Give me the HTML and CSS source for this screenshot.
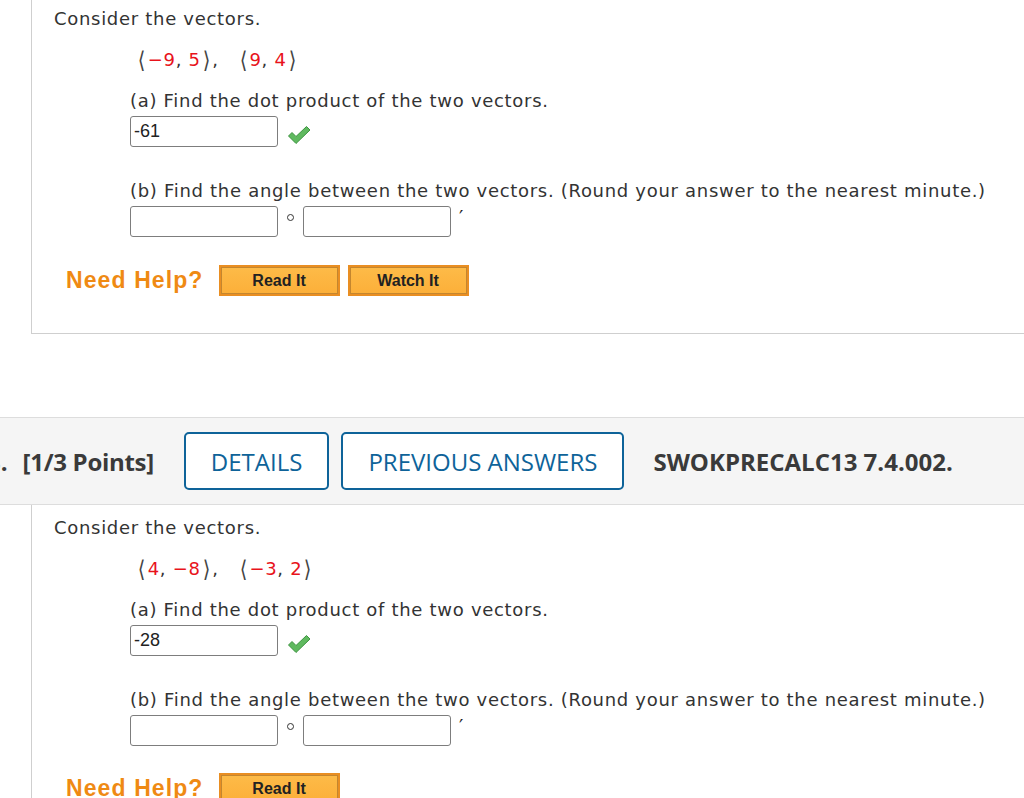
FILE: index.html
```html
<!DOCTYPE html>
<html>
<head>
<meta charset="utf-8">
<link rel="stylesheet" href="styles.css">
</head>
<body>
<div class="panel panel-first">
  <div class="intro">Consider the vectors.</div>
  <div class="indent">
    <div class="vectors"><span class="br">⟨</span><span class="red">−9</span>, <span class="red">5</span><span class="br">⟩</span>,<span class="vgap"></span><span class="br">⟨</span><span class="red">9</span>, <span class="red">4</span><span class="br">⟩</span></div>
    <div class="line">(a) Find the dot product of the two vectors.</div>
    <div class="inrow">
      <div class="box">-61</div>
      <svg class="check" width="24" height="20" viewBox="0 0 24 20"><path d="M1.5 11 L5 7.5 L9 11.5 L19.5 1.5 L23 5 L9 18.5 Z" fill="#5fb95f" stroke="#3d9440" stroke-width="1" stroke-linejoin="round"/></svg>
    </div>
    <div class="line lb">(b) Find the angle between the two vectors. (Round your answer to the nearest minute.)</div>
    <div class="inrow">
      <div class="box"></div><span class="deg"></span><div class="box"></div><span class="prime">′</span>
    </div>
  </div>
  <div class="help">
    <span class="need">Need Help?</span>
    <span class="hbtn">Read It</span>
    <span class="hbtn">Watch It</span>
  </div>
</div>

<div class="qhead">
  <span class="qnum">3.</span>
  <span class="pts">[1/3 Points]</span>
  <span class="obtn">DETAILS</span>
  <span class="obtn">PREVIOUS ANSWERS</span>
  <span class="qid">SWOKPRECALC13 7.4.002.</span>
</div>

<div class="panel">
  <div class="intro">Consider the vectors.</div>
  <div class="indent">
    <div class="vectors"><span class="br">⟨</span><span class="red">4</span>, <span class="red">−8</span><span class="br">⟩</span>,<span class="vgap"></span><span class="br">⟨</span><span class="red">−3</span>, <span class="red">2</span><span class="br">⟩</span></div>
    <div class="line">(a) Find the dot product of the two vectors.</div>
    <div class="inrow">
      <div class="box">-28</div>
      <svg class="check" width="24" height="20" viewBox="0 0 24 20"><path d="M1.5 11 L5 7.5 L9 11.5 L19.5 1.5 L23 5 L9 18.5 Z" fill="#5fb95f" stroke="#3d9440" stroke-width="1" stroke-linejoin="round"/></svg>
    </div>
    <div class="line lb">(b) Find the angle between the two vectors. (Round your answer to the nearest minute.)</div>
    <div class="inrow">
      <div class="box"></div><span class="deg"></span><div class="box"></div><span class="prime">′</span>
    </div>
  </div>
  <div class="help help2">
    <span class="need">Need Help?</span>
    <span class="hbtn">Read It</span>
  </div>
</div>
</body>
</html>
```

FILE: styles.css
```css
html, body {
  margin: 0;
  padding: 0;
  background: #fff;
}
body {
  width: 1024px;
  height: 798px;
  overflow: hidden;
  font-family: "DejaVu Sans", Verdana, sans-serif;
  font-size: 18px;
  letter-spacing: 0.7px;
  color: #333;
}
.panel {
  margin-left: 31px;
  border-left: 1px solid #cfcfcf;
  border-bottom: 1px solid #cfcfcf;
  padding: 12px 0 37px 22px;
}
.panel-first {
  margin-top: -4px;
}
.intro {
  line-height: 22px;
}
.indent {
  margin-left: 76px;
}
.vectors {
  margin-top: 19px;
  line-height: 22px;
  font-size: 18px;
  padding-left: 6px;
  display: flex;
  align-items: center;
  white-space: pre;
}
.br {
  color: #444;
  font-size: 23px;
  line-height: 22px;
  margin: 0 1px;
  transform: scaleX(0.85);
}
.red {
  color: #e8131b;
}
.vgap {
  display: inline-block;
  width: 19px;
}
.line {
  margin-top: 19px;
  line-height: 22px;
}
.lb {
  margin-top: 33px;
}
.inrow {
  margin-top: 4px;
  display: flex;
  align-items: center;
  height: 31px;
}
.box {
  box-sizing: border-box;
  width: 148px;
  height: 31px;
  border: 1px solid #7d7d7d;
  border-radius: 3px;
  font-family: "Liberation Sans", Arial, sans-serif;
  font-size: 18px;
  letter-spacing: 0;
  color: #222;
  padding: 4px 0 0 3px;
  background: #fff;
}
.check {
  margin-left: 9px;
  margin-top: 6px;
}
.deg {
  box-sizing: border-box;
  width: 7px;
  height: 7px;
  border: 1.6px solid #333;
  border-radius: 50%;
  margin: 0 9px 0 9px;
  align-self: flex-start;
  margin-top: 8px;
}
.prime {
  margin-left: 8px;
  font-size: 19px;
  color: #222;
  align-self: flex-start;
  margin-top: 0;
}
.help {
  margin-top: 28px;
  margin-left: 12px;
  display: flex;
  align-items: center;
  gap: 8px;
  height: 31px;
}
.need {
  font-family: "Liberation Sans", Arial, sans-serif;
  font-weight: bold;
  font-size: 23px;
  letter-spacing: 1.1px;
  color: #ef8a13;
  margin-right: 7px;
}
.hbtn {
  box-sizing: border-box;
  width: 121px;
  height: 31px;
  border: 2px solid #e98e22;
  box-shadow: inset 0 0 0 1px #c4862f;
  background: linear-gradient(#fdbb48, #fcaf39);
  font-family: "Liberation Sans", Arial, sans-serif;
  font-weight: bold;
  font-size: 16px;
  color: #222;
  display: flex;
  align-items: center;
  justify-content: center;
  letter-spacing: 0;
}
.help2 {
  margin-top: 27px;
}
.qhead {
  margin-top: 83px;
  background: #f5f5f5;
  border-top: 1px solid #ddd;
  border-bottom: 1px solid #ddd;
  padding: 14px 0;
  display: flex;
  align-items: center;
  font-family: "Open Sans", sans-serif;
  font-size: 24px;
  letter-spacing: 0;
}
.qnum {
  font-weight: bold;
  color: #3a3a3a;
  margin-left: -13px;
  margin-right: 15px;
}
.pts {
  font-weight: bold;
  color: #3a3a3a;
  margin-right: 30px;
  letter-spacing: -0.3px;
}
.obtn {
  box-sizing: border-box;
  height: 58px;
  border: 2px solid #0e6399;
  border-radius: 5px;
  background: #fff;
  color: #0e6399;
  display: flex;
  align-items: center;
  padding: 0 25px;
  margin-right: 12px;
}
.qid {
  font-weight: bold;
  color: #3a3a3a;
  margin-left: 17px;
}
```
